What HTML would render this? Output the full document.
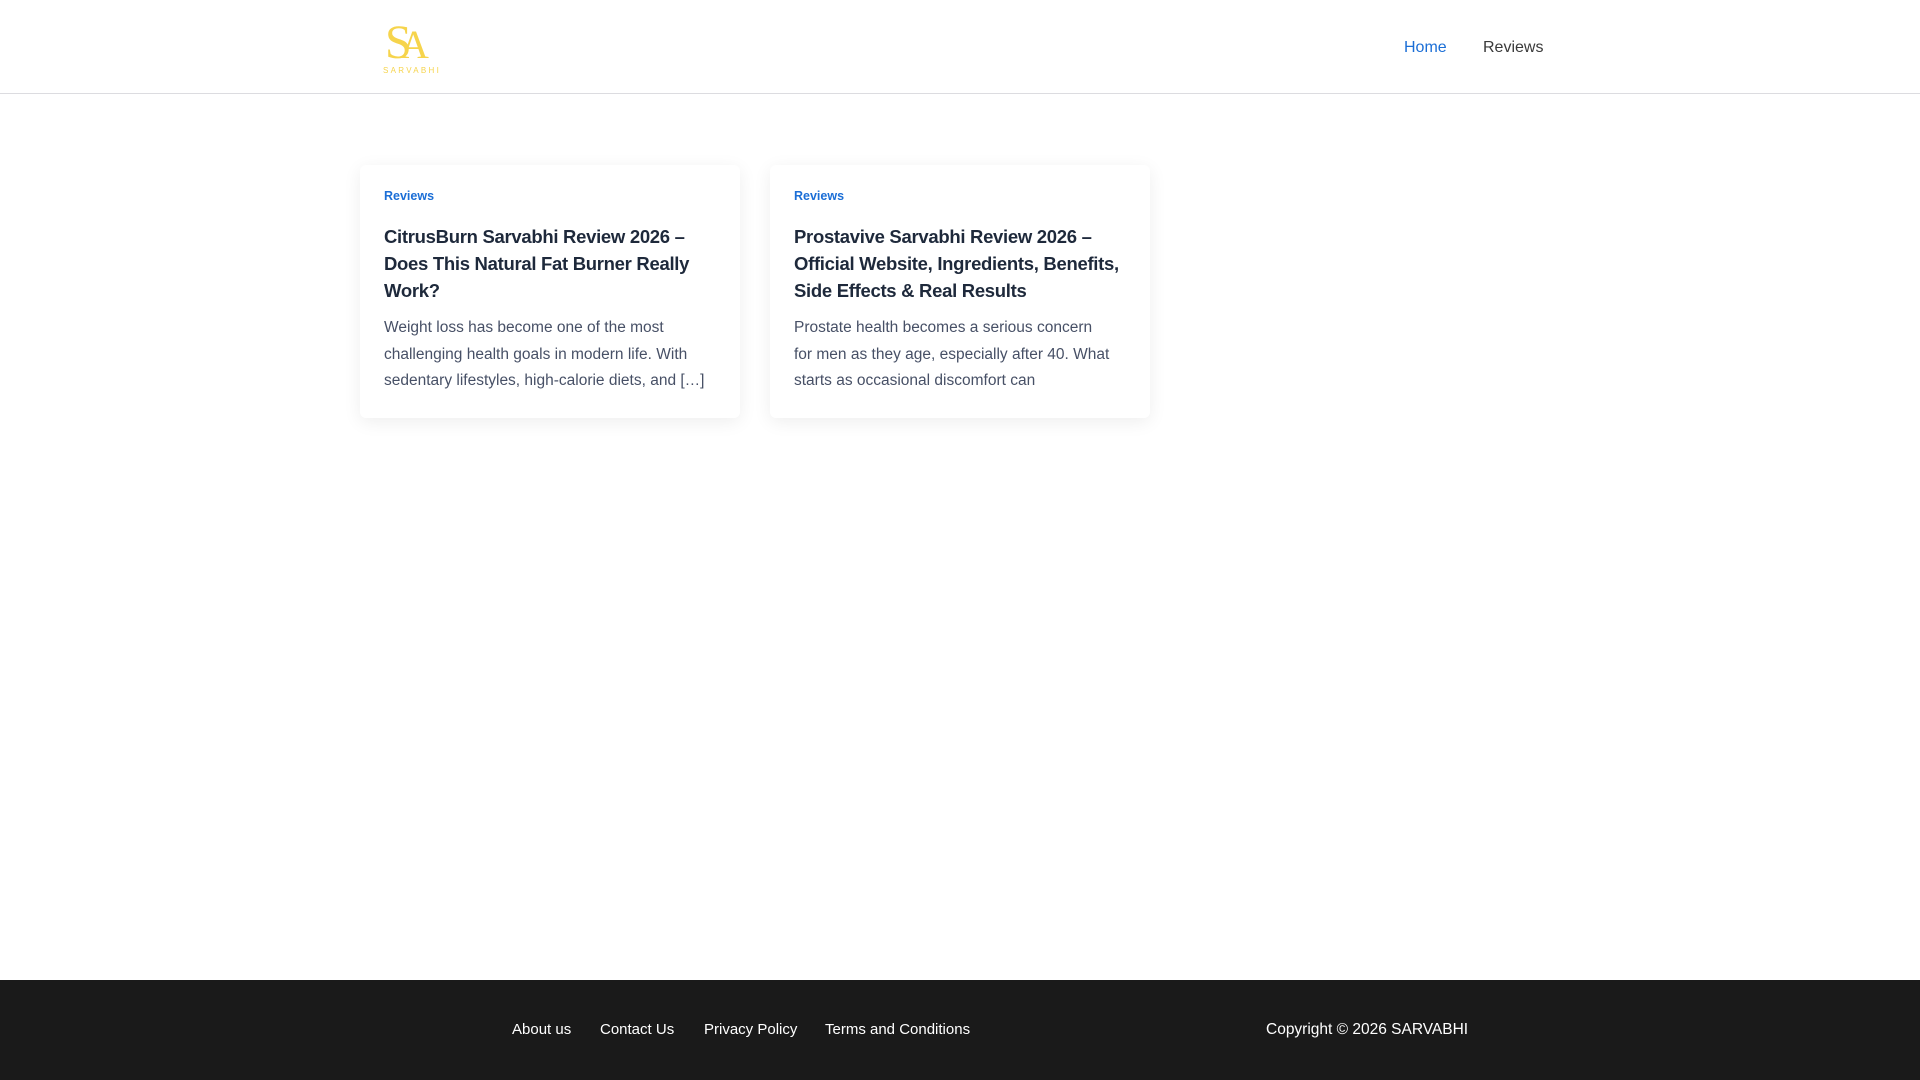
<!DOCTYPE html>
<html><head><meta charset="utf-8"><style>
*{margin:0;padding:0;box-sizing:border-box}
body{width:1920px;height:1080px;position:relative;background:#fff;font-family:"Liberation Sans",Arial,sans-serif;overflow:hidden}
header{position:absolute;left:0;top:0;width:1920px;height:94px;border-bottom:1px solid #dcdce0;background:#fff}
.logo{position:absolute;left:382px;top:16px;width:62px;height:60px}
.nav{position:absolute;top:39px;font-size:16px;color:#3a3a3a}
.card{position:absolute;top:165px;width:380px;height:253px;background:#fff;border-radius:6px;box-shadow:0 4px 18px rgba(0,0,0,0.07);padding:0 24px}
.cat{position:absolute;left:24px;top:24px;font-size:12.5px;font-weight:bold;color:#1b6ed6}
.t{position:absolute;left:24px;top:58px;width:336px;font-size:18.5px;font-weight:bold;line-height:27px;color:#1e293b;letter-spacing:-0.3px}
.e{position:absolute;left:24px;top:150px;width:330px;font-size:15.5px;line-height:26.5px;color:#475066}
footer{position:absolute;left:0;top:980px;width:1920px;height:100px;background:#1a1a1a;color:#fff;font-size:15px}
footer span{position:absolute;top:41px}
</style></head><body>
<header>
<svg class="logo" viewBox="0 0 62 60">
<text x="3" y="42" font-family="Liberation Serif,serif" font-size="48" fill="#f6d44c">S</text>
<text x="18" y="42" font-family="Liberation Serif,serif" font-size="40" fill="#f6d44c">A</text>
<text x="1" y="57" font-family="Liberation Sans,sans-serif" font-size="8" letter-spacing="2.3" fill="#f6d44c">SARVABHI</text>
</svg>
<span class="nav" style="left:1404px;color:#1b6ed6">Home</span>
<span class="nav" style="left:1483px">Reviews</span>
</header>
<div class="card" style="left:360px">
<div class="cat">Reviews</div>
<div class="t">CitrusBurn Sarvabhi Review 2026 – Does This Natural Fat Burner Really Work?</div>
<div class="e">Weight loss has become one of the most challenging health goals in modern life. With sedentary lifestyles, high-calorie diets, and […]</div>
</div>
<div class="card" style="left:770px">
<div class="cat">Reviews</div>
<div class="t">Prostavive Sarvabhi Review 2026 – Official Website, Ingredients, Benefits, Side Effects &amp; Real Results</div>
<div class="e">Prostate health becomes a serious concern<br>for men as they age, especially after 40. What starts as occasional discomfort can</div>
</div>
<footer>
<span style="left:512px">About us</span>
<span style="left:600px">Contact Us</span>
<span style="left:704px">Privacy Policy</span>
<span style="left:825px">Terms and Conditions</span>
<span style="left:1266px;font-size:15.5px">Copyright © 2026 SARVABHI</span>
</footer>
</body></html>
